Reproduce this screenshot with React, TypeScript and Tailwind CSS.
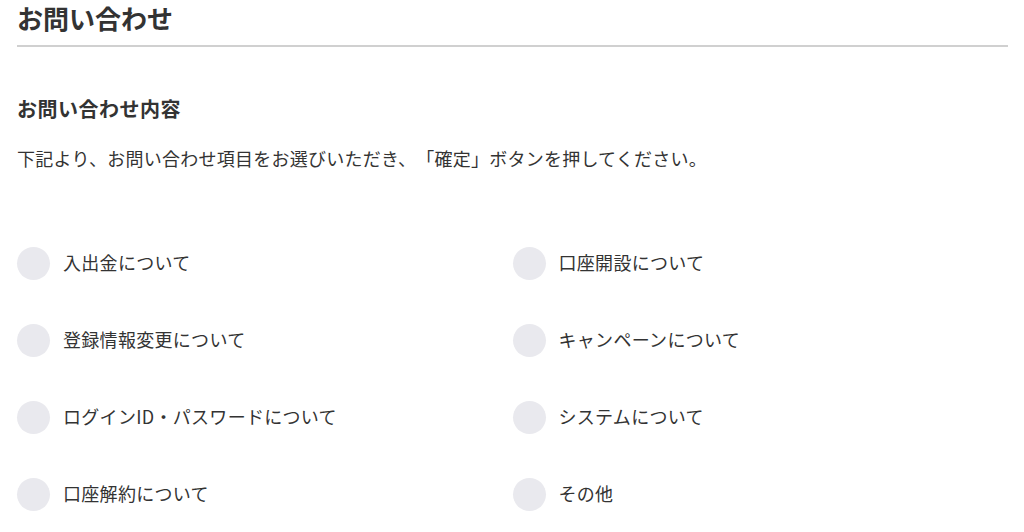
const options = [
  "入出金について",
  "口座開設について",
  "登録情報変更について",
  "キャンペーンについて",
  "ログインID・パスワードについて",
  "システムについて",
  "口座解約について",
  "その他",
];

export default function App() {
  return (
    <div
      className="min-h-screen bg-white pl-[17px] pr-[16px] text-[#333] [text-spacing-trim:space-all]"
      style={{ fontFamily: '"Noto Sans CJK JP", "Noto Sans", sans-serif' }}
    >
      {/* Page title */}
      <div className="border-b-2 border-[#d0d0d0] pt-1 pb-[13px]">
        <h1 className="text-[26px] leading-7 font-bold">お問い合わせ</h1>
      </div>

      {/* Section */}
      <h2 className="mt-[48px] text-[20px] leading-7 font-bold tracking-[0.5px]">お問い合わせ内容</h2>
      <p className="mt-[22px] text-[18px] leading-[26px] tracking-[0.25px]">
        下記より、お問い合わせ項目をお選びいただき、「確定」ボタンを押してください。
      </p>

      {/* Options */}
      <div className="mt-[54px] grid grid-cols-2">
        {options.map((label) => (
          <label key={label} className="flex h-[77px] cursor-pointer items-center gap-[13px]">
            <span className="h-[33px] w-[33px] shrink-0 rounded-full bg-[#e9e9ee]" />
            <span className="pb-1 text-[18px] leading-[26px] tracking-[0.3px]">{label}</span>
          </label>
        ))}
      </div>
    </div>
  );
}
